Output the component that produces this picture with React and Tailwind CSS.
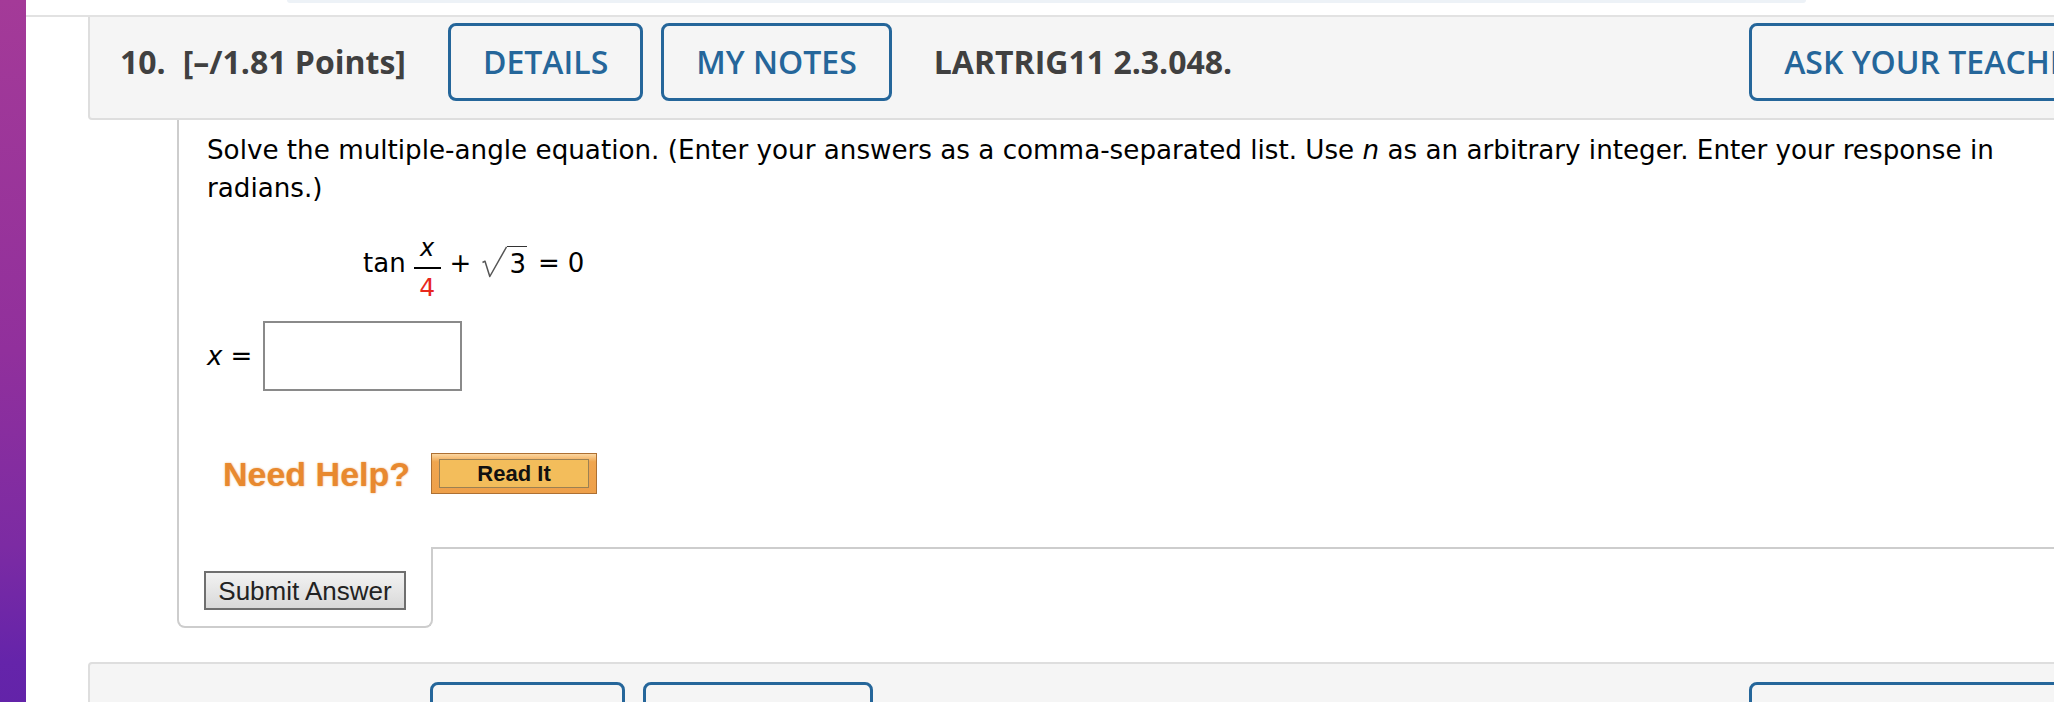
import React from 'react';

const HeaderButton = ({ className = '', children }) => (
  <button
    type="button"
    className={`flex h-[78px] shrink-0 items-center whitespace-nowrap rounded-[8px] border-[3px] border-[#25669a] px-[32px] text-[32px] font-semibold text-[#25669a] ${className}`}
  >
    {children}
  </button>
);

const QuestionHeader = ({ number, points, code, first }) => (
  <div
    className={
      first
        ? 'flex items-center rounded-b-[4px] border-x-2 border-b-2 border-[#dedede] bg-[#f5f5f5] pt-[6px] pb-[17px] pl-[30px] pr-[20px] font-["Open_Sans",sans-serif]'
        : 'flex items-center rounded-t-[4px] border-2 border-[#dedede] bg-[#f5f5f5] pt-[18px] pb-[17px] pl-[30px] pr-[20px] font-["Open_Sans",sans-serif]'
    }
  >
    <span className="whitespace-nowrap text-[32px] font-bold text-[#404040]">{number}</span>
    <span className="ml-[17px] whitespace-nowrap text-[32px] font-bold text-[#404040]">[–/{points} Points]</span>
    <HeaderButton className="ml-[42px]">DETAILS</HeaderButton>
    <HeaderButton className="ml-[18px]">MY NOTES</HeaderButton>
    <span className="ml-[42px] whitespace-nowrap text-[32px] font-bold text-[#404040]">{code}</span>
    <HeaderButton className="ml-auto">ASK YOUR TEACHER</HeaderButton>
  </div>
);

const Equation = () => (
  <div className="ml-[156px] mt-[29px] flex items-center text-[26px] leading-[26px] text-black">
    <span className="mb-[11px]">tan</span>
    <span className="ml-[8px] flex flex-col items-center">
      <i className="text-[24px] leading-[24px]">x</i>
      <span className="mt-[7px] h-[2px] w-[27px] bg-black" />
      <span className="mt-[6px] text-[25px] leading-[25px] text-[#e8281e]">4</span>
    </span>
    <span className="mb-[11px] ml-[9px]">+</span>
    <span className="mb-[12px] ml-[11px] flex items-start">
      <svg width="25" height="32" viewBox="0 0 25 32" className="block">
        <path d="M0.5 16.5 L3 15.2 L7.8 30.5 L24.6 0.75" fill="none" stroke="#555" strokeWidth="1.5" strokeLinejoin="round" />
      </svg>
      <span className="border-t-[1.5px] border-[#333] pl-[2px] pr-[1px] pt-[4px] leading-[26px]">3</span>
    </span>
    <span className="mb-[11px] ml-[11px]">=</span>
    <span className="mb-[11px] ml-[8px]">0</span>
  </div>
);

export default function App() {
  return (
    <div className="flex min-h-[702px] w-full overflow-hidden bg-white">
      <div className="w-[26px] shrink-0 bg-[linear-gradient(180deg,#a43a98_0%,#91309c_45%,#7c2ba3_70%,#6524aa_85%,#5f22a6_100%)]" />
      <div className="min-w-0 flex-1 overflow-hidden">
        <div className="h-[17px] border-b-2 border-[#e2e2e2] bg-white pl-[261px]">
          <div className="h-[3px] w-[1519px] rounded-b-[10px] bg-[#edf2f7]" />
        </div>
        <div className="w-[2119px] pl-[62px]">
          <QuestionHeader number="10." points="1.81" code="LARTRIG11 2.3.048." first />

          <div className="ml-[89px] rounded-bl-[8px] font-['DejaVu_Sans',sans-serif]">
            <div className="border-l-2 border-[#cdcdcd] pb-[53px] pl-[28px] pt-[11px]">
              <p className="text-[26.2px] leading-[38px] text-black">
                <span className="whitespace-nowrap">
                  Solve the multiple-angle equation. (Enter your answers as a comma-separated list. Use <i>n</i> as an arbitrary integer. Enter your response in
                </span>
                <br />
                radians.)
              </p>

              <Equation />

              <div className="mt-[21px] flex items-center text-[26px] leading-[26px] text-black">
                <i>x</i>
                <span className="ml-[8px]">=</span>
                <input
                  type="text"
                  readOnly
                  className="ml-[11px] h-[70px] w-[199px] border-2 border-[#8a8a8a] bg-white outline-none"
                />
              </div>

              <div className="mt-[62px] flex items-center font-['Liberation_Sans',Arial,sans-serif]">
                <span className="ml-[16px] text-[34px] font-bold leading-[40px] text-[#e8892f] [text-shadow:0_0_2px_rgba(232,137,47,0.7)]">
                  Need Help?
                </span>
                <button
                  type="button"
                  className="ml-[21px] flex h-[41px] w-[166px] border border-[#ad7033] bg-[linear-gradient(180deg,#fbd7a2_0%,#f0a64f_20%,#eea04a_100%)] px-[7px] py-[5px]"
                >
                  <span className="flex flex-1 items-center justify-center border border-[#9c8152] bg-[#f3bd5b] text-[22px] font-bold leading-none text-[#111]">
                    Read It
                  </span>
                </button>
              </div>
            </div>

            <div className="flex">
              <div className="w-[256px] shrink-0 rounded-b-[8px] border-x-2 border-b-2 border-[#cdcdcd] pb-[16px] pl-[25px] pt-[24px]">
                <button
                  type="button"
                  className="h-[39px] w-[202px] border-2 border-[#6f6f6f] bg-[linear-gradient(180deg,#f2f2f2,#d9d9d9)] font-['Liberation_Sans',Arial,sans-serif] text-[26px] leading-none text-[#222]"
                >
                  Submit Answer
                </button>
              </div>
              <div className="flex-1 border-t-2 border-[#cdcdcd]" />
            </div>
          </div>

          <div className="mt-[34px]">
            <QuestionHeader number="11." points="1.8" code="LARTRIG11 2.3.050." />
          </div>
        </div>
      </div>
    </div>
  );
}
